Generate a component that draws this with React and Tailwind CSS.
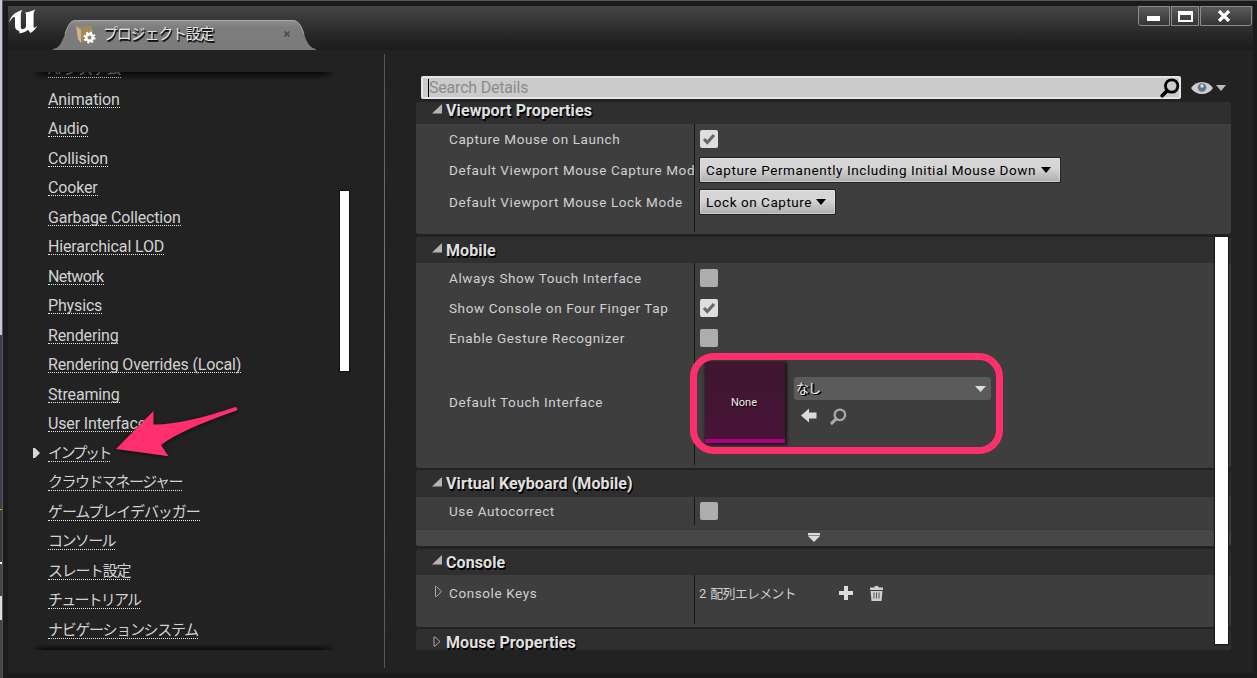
import React from 'react';

const NAV_ITEMS = [
  { label: 'AI システム', spacing: 'text-[15px] tracking-[-0.6px]' },
  { label: 'Animation' },
  { label: 'Audio' },
  { label: 'Collision' },
  { label: 'Cooker' },
  { label: 'Garbage Collection' },
  { label: 'Hierarchical LOD' },
  { label: 'Network', spacing: 'text-[16px] tracking-[-0.6px]' },
  { label: 'Physics' },
  { label: 'Rendering' },
  { label: 'Rendering Overrides (Local)' },
  { label: 'Streaming' },
  { label: 'User Interface' },
  { label: 'インプット', spacing: 'text-[15px] tracking-[-2.5px]', active: true },
  { label: 'クラウドマネージャー', spacing: 'text-[15px] tracking-[-1.5px]' },
  { label: 'ゲームプレイデバッガー', spacing: 'text-[15px] tracking-[-1.1px]' },
  { label: 'コンソール', spacing: 'text-[15px] tracking-[-1.6px]' },
  { label: 'スレート設定', spacing: 'text-[15px] tracking-[-1.3px]' },
  { label: 'チュートリアル', spacing: 'text-[15px] tracking-[-1.8px]' },
  { label: 'ナビゲーションシステム', spacing: 'text-[15px] tracking-[-1.3px]' },
];

function NavItem({ label, spacing = 'text-[16px] tracking-[-0.15px]', active }) {
  return (
    <li className="flex h-[29.5px] shrink-0 items-end">
      <span className="flex w-[17px] justify-start pl-[2px]">
        {active && (
          <svg className="mb-[3px] h-[12px] w-[7px]" viewBox="0 0 7 12">
            <path d="M0 1L2 1L7 6L2 11L0 11Z" fill="#d8d8d8" />
          </svg>
        )}
      </span>
      <span className={`h-[18px] border-b border-dotted border-[#e8e8e8] leading-[19px] whitespace-nowrap text-[#d2d2d2] ${spacing}`}>
        {label}
      </span>
    </li>
  );
}

function Checkbox({ checked }) {
  return (
    <span className={`flex h-[18px] w-[18px] items-center justify-center rounded-[2px] ${checked ? 'bg-[#dedede]' : 'bg-[#adadad]'}`}>
      {checked && (
        <svg className="h-[12px] w-[14px]" viewBox="0 0 14 12">
          <path d="M2 6L5.3 9.5L12 2" fill="none" stroke="#686868" strokeWidth="3.2" />
        </svg>
      )}
    </span>
  );
}

function ComboButton({ children, className }) {
  return (
    <button className={`-ml-px flex h-[26px] items-center justify-between rounded-[2px] border border-[#222] bg-linear-to-b from-[#d6d6d6] from-40% to-[#adadad] pr-[9px] pl-[6px] text-[13.5px] text-black shadow-[inset_0_0_0_1px_rgba(255,255,255,0.35)] ${className}`}>
      <span className="whitespace-nowrap">{children}</span>
      <svg className="h-[6px] w-[10px]" viewBox="0 0 10 6"><path d="M0 0H10L5 6Z" fill="#000" /></svg>
    </button>
  );
}

function Category({ title, open = true, className = '', headClass, titleClass = '', children }) {
  return (
    <section className={`flex shrink-0 flex-col overflow-hidden rounded-[3px] ${className}`}>
      <div className={`flex items-center bg-[#2f2f2f] ${headClass}`}>
        <span className="flex w-[30px] justify-start pl-[16px]">
          {open ? (
            <svg className="mb-[4px] h-[10px] w-[10px]" viewBox="0 0 10 10"><path d="M0 9.5L10 0V9.5Z" fill="#b4b4b4" /></svg>
          ) : (
            <svg className="mb-[3px] ml-[1px] h-[11px] w-[8px]" viewBox="0 0 8 11"><path d="M1 1L2 1L7 5.5L2 10L1 10Z" fill="none" stroke="#aaa" /></svg>
          )}
        </span>
        <h2 className={`text-[16px] leading-[20px] font-bold tracking-[0.1px] whitespace-nowrap text-[#e0e0e0] [text-shadow:1px_1px_1px_#000,1px_2px_0_#000] ${titleClass}`}>{title}</h2>
      </div>
      {children}
    </section>
  );
}

function Row({ label, height, expander, children }) {
  return (
    <div className={`flex ${height}`}>
      <div className="flex w-[279px] items-center overflow-hidden border-r border-[#161616]">
        <span className="flex w-[33px] shrink-0 justify-start pl-[19px]">
          {expander && (
            <svg className="mb-[3px] h-[11px] w-[7px]" viewBox="0 0 7 11"><path d="M.5 .5H1.5L6.3 5.5L1.5 10.5H.5Z" fill="none" stroke="#aaa" /></svg>
          )}
        </span>
        <span className="pt-px text-[13.5px] tracking-[0.6px] whitespace-nowrap text-[#d0d0d0]">{label}</span>
      </div>
      <div className="flex flex-1 items-center pl-[5px]">{children}</div>
    </div>
  );
}

// Empty strip under the last row, keeps the splitter going
function RowTail({ line, rest }) {
  return (
    <div className={rest}>
      <div className={`w-[279px] border-r border-[#161616] ${line}`} />
    </div>
  );
}

function Magnifier({ className, color, stroke }) {
  return (
    <svg className={className} viewBox="0 0 18 18">
      <circle cx="10.5" cy="7.2" r="5.6" fill="none" stroke={color} strokeWidth={stroke} />
      <path d="M6.4 11.5L2 16" stroke={color} strokeWidth={stroke + 0.8} strokeLinecap="round" />
    </svg>
  );
}

function TitleBar() {
  return (
    <header className="flex h-[44px] justify-between bg-linear-to-b from-[#454545] via-[#2a2a2a] via-60% to-[#1c1c1c]">
      <div className="flex">
        <svg className="mt-[3px] h-[26px] w-[30px]" viewBox="8 9 30 26">
          <path d="M9 22.500C10.500 16 15 12 22.500 10C21 12 20.800 13 20.800 15V27C20.800 29 22 29.600 24 28.800C25.500 28 26 27 26 26V15C26 13.500 25.500 13 24.500 12.800C28 12.500 32 11 35.500 9.500C34 11.500 33.600 12.500 33.600 14.500V26C33.600 28.500 35 28 37.500 25.500C36 29 33.500 31 30.500 33L28 29.800C25.500 32 22 33.500 18.500 33.300C20 32.500 20 32 19 31C16.500 30 15 29 15 26V18C15 17 14 16.500 12.500 17.800Z" fill="#fff" />
        </svg>
        <div className="relative mt-[14px] ml-[15px] flex h-[30px] w-[263px] items-center">
          <svg className="absolute inset-0 h-[30px] w-[263px]" viewBox="0 0 263 30">
            <defs>
              <linearGradient id="tab" x1="0" y1="0" x2="0" y2="1">
                <stop offset="0" stopColor="#8f8f8f" />
                <stop offset=".25" stopColor="#7d7d7d" />
                <stop offset="1" stopColor="#7b7b7b" />
              </linearGradient>
            </defs>
            <path d="M0 30V29C6 28 8 24 12 14C15 6 17 0 23 0H239C246 0 248 6 251 14C254 23 257 28 263 29V30Z" fill="url(#tab)" />
            <path d="M12 14C15 6 17 .5 23 .5H239C246 .5 248 6 251 14" fill="none" stroke="#a8a8a8" />
          </svg>
          <div className="relative flex w-full items-center pb-[2px]">
            <svg className="ml-[23px] h-[19px] w-[20px]" viewBox="0 0 20 19">
              <path d="M0 1L8 2L9 1L16 1L16 12L4 18Z" fill="#a38a5c" />
              <path d="M0 1L5 5L5 18L2 14Z" fill="#cbb68b" />
              <path d="M15 1L17 6L14 8Z" fill="#8fa05a" />
              <circle cx="13.5" cy="12.5" r="3.4" fill="none" stroke="#fff" strokeWidth="2.6" />
              <circle cx="13.5" cy="12.5" r="5.1" fill="none" stroke="#fff" strokeWidth="1.9" strokeDasharray="2 2" />
            </svg>
            <span className="ml-[7px] text-[15px] tracking-[-1.2px] whitespace-nowrap text-[#e4e4e4] [text-shadow:1px_1px_0_#111,1px_2px_0_#222]">プロジェクト設定</span>
            <svg className="ml-[71px] h-[6px] w-[6px]" viewBox="0 0 6 6"><path d="M.5 .5L5.5 5.5M5.5 .5L.5 5.5" stroke="#4c4c4c" strokeWidth="1.6" /></svg>
          </div>
        </div>
      </div>
      <div className="mr-[1px] flex h-[20px]">
        <span className="flex w-[32px] items-center justify-center rounded-bl-[3px] border border-[#8b8b8b] bg-linear-to-b from-[#5b5b5b] to-[#353535]">
          <span className="mt-[4px] mr-[2px] h-[5px] w-[13px] bg-white" />
        </span>
        <span className="ml-px flex w-[28px] items-center justify-center border border-[#8b8b8b] bg-linear-to-b from-[#5b5b5b] to-[#353535]">
          <span className="h-[11px] w-[15px] border-2 border-t-4 border-white" />
        </span>
        <span className="ml-px flex w-[52px] items-center justify-center rounded-br-[3px] border border-[#8b8b8b] bg-linear-to-b from-[#5b5b5b] to-[#353535]">
          <svg className="mr-[4px] h-[12px] w-[14px]" viewBox="0 0 14 12"><path d="M2 1L12 11M12 1L2 11" stroke="#fff" strokeWidth="3.2" /></svg>
        </span>
      </div>
    </header>
  );
}

function Sidebar() {
  return (
    <aside className="relative flex w-[376px] shrink-0">
      <div className="relative mt-[22px] ml-[23px] h-[578px] w-[305px] overflow-hidden">
        <ul className="-mt-[23.3px] flex flex-col">
          {NAV_ITEMS.map((item) => <NavItem key={item.label} {...item} />)}
        </ul>
        <div className="absolute inset-x-0 top-0 h-[8px] bg-linear-to-b from-black/70 to-transparent [mask-image:linear-gradient(to_right,transparent,#000_14px,#000_291px,transparent)]" />
        <div className="absolute inset-x-0 bottom-0 h-[6px] bg-linear-to-t from-black/70 to-transparent [mask-image:linear-gradient(to_right,transparent,#000_14px,#000_291px,transparent)]" />
      </div>
      <div className="mt-[141px] ml-[4px] h-[180px] w-[9px] bg-white shadow-[0_0_1px_1px_#111]" />
      {/* callout arrow pointing at the input section */}
      <svg className="absolute top-[350px] left-[102px] h-[64px] w-[136px] drop-shadow-[0_1px_2px_rgba(0,0,0,0.6)]" viewBox="110 400 136 64">
        <path d="M116 449L153.5 411L153.5 424.5C172 425 200 419 234.500 407.300C237.500 406.500 238.500 409.500 236 410.800C210 420 180 431 161 445L168.500 456.300Z" fill="#ff2f6d" />
      </svg>
    </aside>
  );
}

function TouchAsset() {
  return (
    <div className="relative -ml-px flex items-center">
      <div className="ml-[6px] flex h-[81px] w-[80px] flex-col border-b-4 border-[#b1007f] bg-linear-to-b from-[#3d1630] to-[#481338] shadow-[1px_1px_3px_1px_rgba(0,0,0,0.7)]">
        <span className="flex flex-1 items-center justify-center pt-[6px] pr-[2px] text-[11px] text-[#eee] [text-shadow:1px_1px_1px_#000]">None</span>
      </div>
      <div className="ml-[9px] flex flex-col pb-[2px]">
        <div className="flex h-[23px] w-[197px] items-center justify-between rounded-[3px] bg-[#5b5b5b] pr-[5px] pl-[3px]">
          <span className="-ml-px text-[13px] tracking-[-1px] text-[#eee] [text-shadow:1px_1px_0_#000,2px_1px_0_#000]">なし</span>
          <svg className="h-[6px] w-[11px]" viewBox="0 0 11 6"><path d="M0 0H11L5.5 6Z" fill="#ddd" /></svg>
        </div>
        <div className="mt-[8px] flex pl-[7px]">
          <svg className="h-[15px] w-[16px]" viewBox="0 0 16 15"><path d="M0 7.500L8 .5V4.500H15.500V10.500H8V14.500Z" fill="#dadada" /></svg>
          <Magnifier className="ml-[13px] h-[17px] w-[17px]" color="#aaa" stroke={2.4} />
        </div>
      </div>
      <div className="absolute -top-[9px] -left-[9px] h-[101px] w-[313px] rounded-[24px] border-[7px] border-[#ff2f6d]" />
    </div>
  );
}

function Details() {
  return (
    <div className="relative mt-[3px] flex h-[548px] w-[815px] flex-col gap-[3px] overflow-hidden">
      <Category title="Viewport Properties" headClass="h-[22px] pb-[4px]">
        <div className="bg-[#3e3e3e]">
          <Row label="Capture Mouse on Launch" height="h-[30px]"><Checkbox checked /></Row>
          <Row label="Default Viewport Mouse Capture Mode" height="h-[32px]">
            <ComboButton className="w-[362px] tracking-[0.58px]">Capture Permanently Including Initial Mouse Down</ComboButton>
          </Row>
          <Row label="Default Viewport Mouse Lock Mode" height="h-[32px]">
            <ComboButton className="w-[137px] tracking-[0.54px]">Lock on Capture</ComboButton>
          </Row>
          <RowTail rest="h-[16px]" line="h-[14px]" />
        </div>
      </Category>

      <Category title="Mobile" headClass="h-[26px]" titleClass="pt-[2px]">
        <div className="bg-[#3e3e3e]">
          <Row label="Always Show Touch Interface" height="h-[30px]"><Checkbox /></Row>
          <Row label="Show Console on Four Finger Tap" height="h-[30px]"><Checkbox checked /></Row>
          <Row label="Enable Gesture Recognizer" height="h-[30px]"><Checkbox /></Row>
          <Row label="Default Touch Interface" height="h-[98px]"><TouchAsset /></Row>
          <RowTail rest="h-[17px]" line="h-[14px]" />
        </div>
      </Category>

      <Category title="Virtual Keyboard (Mobile)" className="-mt-px" headClass="h-[27px]" titleClass="pt-px">
        <div className="bg-[#3e3e3e]">
          <Row label="Use Autocorrect" height="h-[28px]"><Checkbox /></Row>
          <div className="h-[4px]" />
          <div className="flex h-[17px] items-center justify-center border-t border-[#383838] bg-[#474747] pr-[20px]">
            <svg className="h-[10px] w-[12px]" viewBox="0 0 12 10"><path d="M0 0H12V2H0Z" fill="#ddd" /><path d="M0 2H12V3H0Z" fill="#888" /><path d="M0 3H12L6 9Z" fill="#ddd" /></svg>
          </div>
        </div>
      </Category>

      <Category title="Console" headClass="h-[26px]" titleClass="pt-[2px]">
        <div className="bg-[#3e3e3e]">
          <Row label="Console Keys" height="h-[36px]" expander>
            <span className="-ml-px w-[140px] pt-px text-[13px] tracking-[-0.8px] whitespace-nowrap text-[#d0d0d0]">2&nbsp; 配列エレメント</span>
            <svg className="h-[14px] w-[14px]" viewBox="0 0 14 14"><path d="M5 0H9V5H14V9H9V14H5V9H0V5H5Z" fill="#dcdcdc" /></svg>
            <svg className="ml-[17px] h-[15px] w-[13px]" viewBox="0 0 13 15">
              <path d="M0 1.500H4L5 0H8L9 1.500H13V4H0ZM.5 5H12.500L11.500 15H1.500Z" fill="#cfcfcf" />
              <path d="M4 6.500V12.500M6.500 6.500V12.500M9 6.500V12.500" stroke="#555" />
            </svg>
          </Row>
          <RowTail rest="h-[16px]" line="h-[13px]" />
        </div>
      </Category>

      <Category title="Mouse Properties" className="-mt-px" open={false} headClass="h-[27px]" />

      <div className="absolute top-[135px] right-[3px] h-[407px] w-[13px] bg-white shadow-[0_0_1px_1px_#1a1a1a]" />
    </div>
  );
}

export default function App() {
  return (
    <div className="flex h-[678px] w-[1257px] overflow-hidden bg-[#1b1b1b] font-[Roboto,'Noto_Sans_CJK_JP',sans-serif]">
      <div className="flex w-[2px] shrink-0 flex-col bg-[#444]">
        <div className="h-[335px] bg-[#c6c8da]" />
        <div className="h-[174px] bg-[#393e50]" />
        <div className="h-px bg-[#d9a520]" />
        <div className="h-[52px] bg-[#3c3c3c]" />
        <div className="h-[2px] bg-white" />
        <div className="h-[32px] bg-[#444]" />
        <div className="h-[24px] bg-[#ddd]" />
      </div>
      <div className="flex flex-1 flex-col border-t border-l border-[#555] pt-[5px] pr-[4px] pl-[5px]">
        <TitleBar />
        <main className="flex h-[623px] bg-[#222]">
          <Sidebar />
          <div className="mt-[4px] h-[614px] w-px bg-linear-to-b from-[#555] via-[#888] to-[#555]" />
          <div className="flex flex-col pl-[31px]">
            <div className="mt-[26px] flex items-center">
              <div className="ml-[5px] flex h-[23px] w-[760px] items-center justify-between rounded-[2px] border-2 border-[#e6e6e6] bg-[#cbcbcb] pl-[5px]">
                <span className="border-l border-black text-[16px] leading-[18px] tracking-[-0.2px] text-[#8b8b8b]">Search Details</span>
                <Magnifier className="-mr-px h-[20px] w-[20px]" color="#000" stroke={2.5} />
              </div>
              <svg className="ml-[10px] h-[14px] w-[22px]" viewBox="0 0 22 14">
                <path d="M0 7C5 -1 17 -1 22 7C17 15 5 15 0 7Z" fill="#cecece" />
                <circle cx="11" cy="6.500" r="4.300" fill="#64738f" />
                <circle cx="11" cy="5" r="1.700" fill="#ddd" />
              </svg>
              <svg className="ml-[3px] h-[6px] w-[10px]" viewBox="0 0 10 6"><path d="M0 0H10L5 6Z" fill="#bbb" /></svg>
            </div>
            <Details />
          </div>
        </main>
      </div>
    </div>
  );
}
